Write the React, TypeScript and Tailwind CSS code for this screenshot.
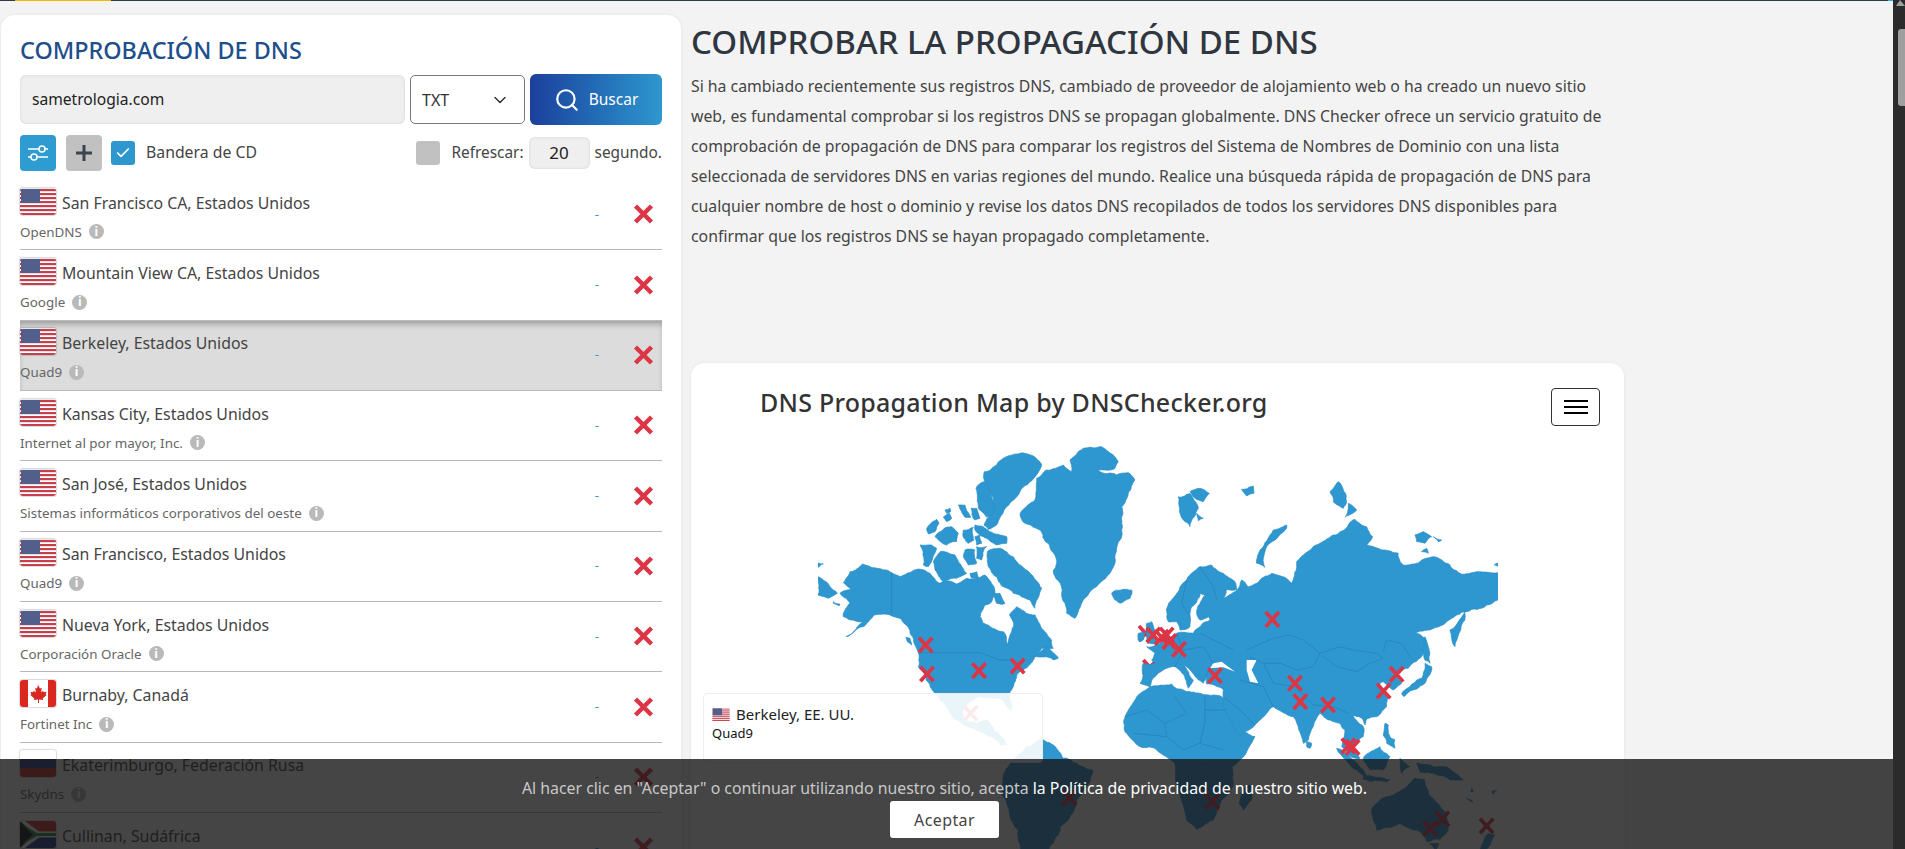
import { Check, ChevronDown, Search } from 'lucide-react';

type Row = { name: string; provider: string; flag: 'us' | 'ca' | 'ru' | 'za'; active?: boolean };

const rows: Row[] = [
  { name: 'San Francisco CA, Estados Unidos', provider: 'OpenDNS', flag: 'us' },
  { name: 'Mountain View CA, Estados Unidos', provider: 'Google', flag: 'us' },
  { name: 'Berkeley, Estados Unidos', provider: 'Quad9', flag: 'us', active: true },
  { name: 'Kansas City, Estados Unidos', provider: 'Internet al por mayor, Inc.', flag: 'us' },
  { name: 'San José, Estados Unidos', provider: 'Sistemas informáticos corporativos del oeste', flag: 'us' },
  { name: 'San Francisco, Estados Unidos', provider: 'Quad9', flag: 'us' },
  { name: 'Nueva York, Estados Unidos', provider: 'Corporación Oracle', flag: 'us' },
  { name: 'Burnaby, Canadá', provider: 'Fortinet Inc', flag: 'ca' },
  { name: 'Ekaterimburgo, Federación Rusa', provider: 'Skydns', flag: 'ru' },
  { name: 'Cullinan, Sudáfrica', provider: 'Afrihost', flag: 'za' },
];

// Map shapes are in 3x crop coordinates: "west" sits at 800,430 and "east" at 1100,430
const westLand = [
  '130,458 150,425 188,402 230,415 275,428 300,440 335,425 362,418 390,430 420,460 445,453 470,462 500,445 530,445 555,435 578,465 585,490 575,515 555,525 540,560 548,578 590,600 610,605 622,648 630,615 640,590 628,555 650,530 680,550 705,555 725,595 755,630 760,655 725,655 700,690 670,720 650,735 640,770 628,790 635,840 620,830 600,805 540,800 495,830 490,870 530,880 560,870 585,905 620,945 600,945 560,915 500,890 450,850 420,810 405,790 378,750 355,710 352,660 330,610 300,565 270,555 222,555 190,590 138,620 190,575 130,560 150,520 120,490 155,478',
  '850,55 900,50 930,70 955,95 945,115 895,120 950,135 985,128 1005,150 985,190 965,230 965,280 960,330 945,400 930,430 890,470 850,510 825,565 800,550 785,490 760,420 770,400 745,340 720,300 675,280 660,255 700,215 710,145 740,120 790,105 815,125 810,90',
  '553,125 590,105 610,85 660,70 700,78 725,105 705,140 660,185 620,230 590,285 565,298 552,285 580,240 580,205 560,175 553,150',
  '528,175 550,155 575,200 585,245 560,262 535,235',
  '435,240 450,235 452,245 440,250',
  '430,262 448,250 455,265 440,275',
  '475,225 495,225 512,262 495,262',
  '513,235 530,235 540,265 525,270',
  '380,300 410,268 417,280 405,305 385,312',
  '405,320 430,298 455,290 475,310 470,335 440,345 415,330',
  '490,300 520,292 522,330 505,340 492,325',
  '525,285 550,290 580,310 620,320 620,340 590,345 550,320 525,300',
  '525,320 540,315 545,340 530,345',
  '360,345 395,345 410,355 385,410 370,405',
  '400,395 420,365 465,375 500,430 470,445 430,455 405,420',
  '562,365 600,355 640,380 690,430 725,475 705,535 690,510 640,490 610,470 590,440 565,410',
  '530,350 560,350 545,390 530,385',
  '495,360 525,360 530,400 505,405 490,380',
  '510,430 530,425 535,445 515,445',
  '582,490 600,490 615,520 590,520',
  '700,680 740,650 775,685 760,690',
  '318,622 330,625 335,645 322,635',
  '53,440 90,470 112,490 85,505 53,495',
  '53,398 70,402 55,412',
  '100,515 120,522 118,527 100,520',
  '725,925 760,945 790,985 830,1000 878,1020 860,1070 830,1110 810,1160 780,1190 760,1240 730,1290 660,1290 655,1200 610,1100 610,1040 640,990 680,950',
];

const eastLand = [
  '75,860 110,800 150,770 215,762 260,785 300,790 365,800 380,840 415,905 465,920 440,965 395,1010 400,1060 365,1110 340,1170 290,1198 260,1170 235,1070 225,1000 170,960 120,950 75,905',
  '430,1075 450,1065 455,1110 430,1140 418,1120',
  '200,545 215,510 260,450 300,410 335,405 370,430 405,455 410,478 378,480 370,505 410,480 425,450 445,470 480,450 515,430 550,440 575,460 590,395 610,375 660,340 700,315 745,285 765,268 800,290 818,320 800,345 850,360 895,370 910,405 960,395 1000,380 1050,405 1080,430 1130,425 1200,430 1200,505 1160,525 1100,545 1070,555 1040,575 990,600 945,610 975,625 970,670 925,715 890,735 905,760 880,780 850,755 840,760 865,800 860,830 830,860 790,870 760,855 790,890 790,920 760,950 780,985 745,975 725,950 735,900 720,880 690,870 660,850 625,930 610,940 580,860 520,830 500,850 465,885 420,915 368,825 370,780 320,762 325,720 310,760 295,750 270,720 250,705 280,750 265,775 255,745 225,710 200,715 165,740 150,770 135,765 120,760 130,700 165,700 155,690 165,670 140,650 180,640 230,610 280,610 330,570 325,560 300,570 290,550 315,495 300,490 275,530 270,590 240,600 230,575 205,575',
  '905,790 930,770 965,745 975,700 995,710 975,760 940,780 912,800',
  '975,620 985,650 990,700 975,690 972,650',
  '1050,600 1100,535 1095,570 1065,650 1058,640',
  '142,640 140,580 155,575 170,640',
  '115,610 135,605 130,630 118,635',
  '35,490 70,478 95,480 90,505 60,520 45,510',
  '235,200 270,190 295,235 270,290 250,270',
  '270,185 300,175 328,190 310,215 285,205',
  '290,250 310,265 295,272',
  '425,178 460,168 462,190 440,198',
  '470,400 480,360 520,300 560,285 560,295 510,340 490,385 495,412',
  '690,185 715,155 740,215 730,235 700,215',
  '745,220 770,240 735,260',
  '945,315 970,305 995,320 975,340 950,335',
  '1000,320 1025,330 1015,335',
  '965,365 980,355 985,370',
  '1183,405 1200,398 1200,412',
  '620,935 635,940 630,955 620,950',
  '790,870 800,865 795,885',
  '855,880 865,885 870,920 885,930 885,955 860,940 850,915',
  '710,955 790,1020 800,1040 770,1020',
  '790,985 840,950 870,980 850,1020 810,1020',
  '900,985 930,1010 905,1030',
  '950,1000 1030,1010 1090,1050 1050,1050 1000,1030 960,1025',
  '790,1040 870,1050 860,1055 790,1048',
  '815,1140 860,1100 920,1070 945,1045 975,1050 985,1090 1030,1140 1045,1200 1020,1230 980,1235 950,1200 900,1180 830,1200 820,1170',
  '1165,1210 1185,1215 1170,1245 1140,1265',
  '990,1240 1015,1240 1005,1265',
  '1100,1105 1115,1110 1118,1118',
  '1175,1085 1190,1080 1180,1092',
  '1115,1075 1120,1085 1112,1085',
];

const eastHoles = [
  '440,690 470,690 455,720 475,760 450,755 440,720',
  '340,700 365,695 405,725 370,712 330,715',
];

const westBorders = ['275,428 275,550', '355,668 540,668 600,690 640,690', '410,790 470,800 500,830'];

const eastBorders = [
  '660,670 720,650 760,660 830,670 850,685 810,700 770,725 710,710 665,675',
  '930,680 905,640 860,630 850,665',
  '440,660 520,625 570,615 610,630 660,670 640,710 590,720 540,700 490,700 450,680',
  '585,770 640,825 700,830 745,850',
  '300,610 360,640 400,660',
  '250,660 310,650 340,700',
  '260,450 245,520 270,560',
  '300,410 340,470 350,510',
  '420,750 490,770 520,830',
  '490,700 520,760 585,770',
  '230,610 250,660 225,710',
  '75,860 140,840 195,880 260,850 225,800',
  '315,800 315,880 300,940 370,960',
  '195,880 200,920 250,960 300,940',
  '100,910 200,920',
  '380,840 315,840',
  '225,1000 290,1000 395,1010',
  '240,1080 350,1080',
  '370,800 420,840 465,885',
];

const westMarks = [[377, 645], [381, 732], [537, 722], [653, 708], [1037, 610], [1050, 712], [512, 850], [808, 1103]];
const eastMarks = [
  [160, 615], [185, 622], [200, 615], [208, 635], [237, 658], [345, 737], [517, 568], [585, 760],
  [601, 815], [684, 825], [890, 733], [851, 783], [745, 948], [758, 952], [337, 1115], [990, 1195], [1027, 1167], [1160, 1188],
];

// breaks long straight edges up so the coastlines don't look like cut paper
const roughen = (points: string) => {
  let pts = points.split(' ').map((p) => p.split(',').map(Number));
  for (let pass = 0; pass < 3; pass++) {
    const next: number[][] = [];
    pts.forEach((a, i) => {
      const b = pts[(i + 1) % pts.length];
      next.push(a);
      const dx = b[0] - a[0];
      const dy = b[1] - a[1];
      const len = Math.hypot(dx, dy);
      if (len > 9) {
        const seed = Math.sin(a[0] * 12.9898 + a[1] * 78.233) * 43758.5453;
        const off = ((seed - Math.floor(seed)) - 0.5) * Math.min(len * 0.22, 9);
        next.push([(a[0] + b[0]) / 2 - (dy / len) * off, (a[1] + b[1]) / 2 + (dx / len) * off]);
      }
    });
    pts = next;
  }
  return pts.map((p) => `${p[0].toFixed(1)},${p[1].toFixed(1)}`).join(' ');
};

const Mark = ({ x, y }: { x: number; y: number }) => (
  <path d={`M${x - 20} ${y - 22}L${x + 20} ${y + 22}M${x + 20} ${y - 22}L${x - 20} ${y + 22}`} stroke="#dc3545" strokeWidth="11" />
);

const WorldMap = () => (
  <svg viewBox="818 430 680 420" className="ml-[127px] mt-[4px] block h-[420px] w-[680px] shrink-0">
    <g transform="translate(800 430) scale(0.3333)" fill="#2e97d0" stroke="#2b8cc4" strokeWidth="2">
      {westLand.map((p) => <polygon key={p} points={roughen(p)} />)}
      {westBorders.map((p) => <polyline key={p} points={p} fill="none" stroke="#2a86bd" strokeWidth="3" />)}
      {westMarks.map(([x, y]) => <Mark key={`${x}-${y}`} x={x} y={y} />)}
    </g>
    <g transform="translate(1100 430) scale(0.3333)" fill="#2e97d0" stroke="#2b8cc4" strokeWidth="2">
      {eastLand.map((p) => <polygon key={p} points={roughen(p)} />)}
      {eastHoles.map((p) => <polygon key={p} points={p} fill="#fff" stroke="none" />)}
      {eastBorders.map((p) => <polyline key={p} points={p} fill="none" stroke="#2a86bd" strokeWidth="3" />)}
      {eastMarks.map(([x, y]) => <Mark key={`${x}-${y}`} x={x} y={y} />)}
    </g>
  </svg>
);

const UsFlag = ({ className }: { className: string }) => (
  <svg viewBox="0 0 36 27" className={className}>
    <defs>
      <pattern id="stars" width="2" height="2" patternUnits="userSpaceOnUse">
        <rect width="1" height="1" x="0.5" y="0.5" fill="#c8cde0" />
      </pattern>
    </defs>
    <rect width="36" height="27" fill="#fff" />
    {[1, 5, 9, 13, 17, 21, 25].map((y) => <rect key={y} y={y} width="36" height="2.2" fill="#c4404c" />)}
    <rect y="0" width="36" height="1" fill="#e8e8e8" />
    <rect x="1" y="1" width="19" height="14" fill="#2b3a6e" />
    <rect x="1" y="1" width="19" height="14" fill="url(#stars)" />
  </svg>
);

const Flag = ({ kind }: { kind: Row['flag'] }) => (
  <span className="block h-[27px] w-[36px] shrink-0 overflow-hidden rounded-[3px] shadow-[0_0_1px_1px_rgba(0,0,0,0.15)]">
    {kind === 'us' && <UsFlag className="block h-full w-full" />}
    {kind === 'ca' && (
      <svg viewBox="0 0 36 27" className="block h-full w-full">
        <rect width="36" height="27" fill="#fff" />
        <rect width="8" height="27" fill="#d8281f" />
        <rect x="28" width="8" height="27" fill="#d8281f" />
        <path d="M18 5l2 3.500 1.800-.8-.8 4.800 2.200-1.800.6 1.500 2.700-.4-.8 2.700 1 .6-4 3.400.5 1.600-4.200-.5v3.400h-1v-3.400l-4.200.5.500-1.600-4-3.400 1-.6-.8-2.700 2.700.4.600-1.500 2.200 1.800-.8-4.800 1.800.8z" fill="#d8281f" />
      </svg>
    )}
    {kind === 'ru' && (
      <svg viewBox="0 0 36 27" className="block h-full w-full">
        <rect width="36" height="9" fill="#fff" />
        <rect y="9" width="36" height="9" fill="#2a3f90" />
        <rect y="18" width="36" height="9" fill="#c9302c" />
      </svg>
    )}
    {kind === 'za' && (
      <svg viewBox="0 0 36 27" className="block h-full w-full">
        <rect width="36" height="13.500" fill="#d0342c" />
        <rect y="13.500" width="36" height="13.500" fill="#1f3a93" />
        <path d="M0 0L16 13.500L0 27Z" fill="#111" />
        <path d="M0 0h5L19 10.500H36V16.500H19L5 27H0L15 13.500Z" fill="#fff" />
        <path d="M0 2L17 12H36V15H17L0 25L13 13.500Z" fill="#1e8a4c" />
      </svg>
    )}
  </span>
);

const InfoDot = () => (
  <span className="ml-[7px] flex h-[15px] w-[15px] items-center justify-center rounded-full bg-[#b9b9b9] text-[12px] font-bold leading-none text-white">
    i
  </span>
);

const ServerRow = ({ row }: { row: Row }) => (
  <div
    className={`flex h-[70.35px] items-center justify-between border-b-[1.5px] border-[#b9b9b9] pb-[1px] ${
      row.active ? 'bg-[#dcdcdc] shadow-[inset_0_5px_6px_-2px_rgba(0,0,0,0.3)]' : ''
    }`}
  >
    <div>
      <div className="flex items-center gap-[6px]">
        <Flag kind={row.flag} />
        <span className="mt-[3px] text-[15.85px] leading-[24px] text-[#444]">{row.name}</span>
      </div>
      <div className="mt-[8px] flex items-center text-[13.4px] leading-[18px] text-[#666]">
        {row.provider}
        <InfoDot />
      </div>
    </div>
    <div className="flex items-center">
      <span className="text-[13px] leading-none text-[#2e97d0]">-</span>
      <svg viewBox="0 0 21 20" className="ml-[34px] mr-[8px] h-[20px] w-[21px]">
        <path d="M2.500 2L18.500 18M18.500 2L2.500 18" stroke="#dc3545" strokeWidth="4.500" />
      </svg>
    </div>
  </div>
);

const DnsPanel = () => (
  <section className="mt-[14px] ml-[1px] w-[680px] shrink-0 rounded-t-[14px] bg-white px-[19px] pt-[19px] shadow-[0_0_4px_rgba(0,0,0,0.06)]">
    <h2 className="text-[23.4px] font-medium leading-[32px] text-[#1f4e8c]">COMPROBACIÓN DE DNS</h2>
    <div className="mt-[8px] flex items-center">
      <div className="flex h-[49px] w-[385px] items-center rounded-[6px] bg-[#efefef] pl-[12px] text-[15.6px] text-[#222] shadow-[inset_0_0_3px_rgba(0,0,0,0.12)]">
        sametrologia.com
      </div>
      <div className="ml-[5px] flex h-[49px] w-[115px] items-center justify-between rounded-[5px] border border-[#777] bg-white pl-[11px] pr-[14px] text-[16px] text-[#333]">
        TXT
        <ChevronDown size={20} strokeWidth={1.8} />
      </div>
      <button className="ml-[5px] flex h-[51px] w-[132px] items-center justify-center gap-[9px] rounded-[6px] bg-gradient-to-r from-[#1c3f9c] to-[#2f97cf] text-[15.5px] text-white">
        <Search size={26} strokeWidth={2} />
        Buscar
      </button>
    </div>
    <div className="mt-[10px] flex h-[36px] items-center">
      <button className="flex h-[36px] w-[36px] items-center justify-center rounded-[4px] bg-[#2e9bd1]">
        <svg viewBox="0 0 24 24" className="h-[24px] w-[24px]" fill="none" stroke="#fff" strokeWidth="1.500">
          <path d="M2 8H13M19 8H22M2 16H5M11 16H22" />
          <circle cx="16" cy="8" r="3" />
          <circle cx="8" cy="16" r="3" />
        </svg>
      </button>
      <button className="ml-[10px] flex h-[36px] w-[36px] items-center justify-center rounded-[4px] bg-[#c1c1c1]">
        <svg viewBox="0 0 16 16" className="h-[16px] w-[16px]">
          <path d="M8 0V16M0 8H16" stroke="#3c4450" strokeWidth="3" />
        </svg>
      </button>
      <span className="ml-[9px] flex h-[24px] w-[24px] items-center justify-center rounded-[3px] bg-[#2e97d0] text-white">
        <Check size={16} strokeWidth={2.500} />
      </span>
      <span className="ml-[11px] text-[15.8px] text-[#444]">Bandera de CD</span>
      <span className="ml-auto h-[24px] w-[24px] rounded-[3px] bg-[#c1c1c1]" />
      <span className="ml-[11px] text-[15.4px] text-[#444]">Refrescar:</span>
      <span className="ml-[5px] flex h-[32px] w-[61px] items-center justify-center rounded-[6px] bg-[#efefef] text-[17px] text-[#222] shadow-[inset_0_0_3px_rgba(0,0,0,0.12)]">
        20
      </span>
      <span className="ml-[5px] text-[15.4px] text-[#444]">segundo.</span>
    </div>
    <div className="mt-[9px]">
      {rows.map((row) => <ServerRow key={row.name} row={row} />)}
    </div>
  </section>
);

const MapCard = () => (
  <section className="mt-[112px] w-[933px] rounded-t-[14px] bg-white shadow-[0_0_4px_rgba(0,0,0,0.06)]">
    <div className="flex items-start justify-between pl-[69px] pr-[24px] pt-[25px]">
      <h3 className="-mt-[2px] text-[25px] font-medium leading-[32px] tracking-[0.25px] text-[#333]">
        DNS Propagation Map by DNSChecker.org
      </h3>
      <button className="flex h-[38px] w-[49px] flex-col items-center justify-center gap-[4px] rounded-[4px] border border-[#333]">
        <span className="h-[2px] w-[24px] bg-black" />
        <span className="h-[2px] w-[24px] bg-black" />
        <span className="h-[2px] w-[24px] bg-black" />
      </button>
    </div>
    <WorldMap />
  </section>
);

export default function App() {
  return (
    <div className="flex h-[849px] overflow-hidden bg-[#f3f3f3] font-['Noto_Sans',sans-serif]">
      <div className="relative flex min-w-0 flex-1 flex-col overflow-hidden">
        <div className="flex h-[1px] shrink-0 justify-between bg-[#2f3b47]">
          <span className="ml-[15px] w-[96px] bg-[#f5b800]" />
          <span className="w-[5px] bg-[#3aa9e6]" />
        </div>
        <div className="flex min-h-0 flex-1 items-start">
          <DnsPanel />
          <main className="ml-[10px] min-w-0">
            <h1 className="mt-[21px] text-[33px] font-medium leading-[40px] text-[#2f3640]">
              COMPROBAR LA PROPAGACIÓN DE DNS
            </h1>
            <p className="mt-[9px] w-[924px] text-[15.8px] leading-[30px] text-[#444]">
              Si ha cambiado recientemente sus registros DNS, cambiado de proveedor de alojamiento web o ha creado un nuevo sitio web, es fundamental comprobar si los registros DNS se propagan globalmente. DNS Checker ofrece un servicio gratuito de comprobación de propagación de DNS para comparar los registros del Sistema de Nombres de Dominio con una lista seleccionada de servidores DNS en varias regiones del mundo. Realice una búsqueda rápida de propagación de DNS para cualquier nombre de host o dominio y revise los datos DNS recopilados de todos los servidores DNS disponibles para confirmar que los registros DNS se hayan propagado completamente.
            </p>
            <MapCard />
          </main>
        </div>

        {/* Tooltip over the map */}
        <div className="absolute left-[703px] top-[693px] h-[70px] w-[340px] rounded-[4px] border border-[#eee] bg-white/90 px-[8px] pt-[10px]">
          <div className="flex items-center gap-[6px] text-[15px] leading-[20px] text-[#222]">
            <span className="block h-[13px] w-[18px] overflow-hidden">
              <UsFlag className="block h-full w-full" />
            </span>
            Berkeley, EE. UU.
          </div>
          <div className="text-[13px] leading-[18px] text-[#111]">Quad9</div>
        </div>

        {/* Cookie banner */}
        <div className="absolute inset-x-0 bottom-0 flex h-[90px] flex-col items-center bg-[#161616]/80 pr-[4px] pt-[17px]">
          <p className="text-[15.85px] leading-[24px] text-[#c8c8c8]">
            Al hacer clic en "Aceptar" o continuar utilizando nuestro sitio, acepta <span className="text-white">la Política de privacidad de nuestro sitio web.</span>
          </p>
          <button className="mt-[1px] h-[37px] w-[109px] rounded-[3px] bg-white text-[16px] tracking-[0.4px] text-[#444]">
            Aceptar
          </button>
        </div>
      </div>

      <aside className="flex w-[12px] shrink-0 flex-col items-end bg-[#2b2b2b]">
        <svg viewBox="0 0 12 7" className="h-[7px] w-[12px]">
          <path d="M7 0L12 6H3Z" fill="#9f9f9f" />
        </svg>
        <div className="mt-[22px] h-[77px] w-[7px] rounded-l-[3px] bg-[#9f9f9f]" />
      </aside>
    </div>
  );
}
